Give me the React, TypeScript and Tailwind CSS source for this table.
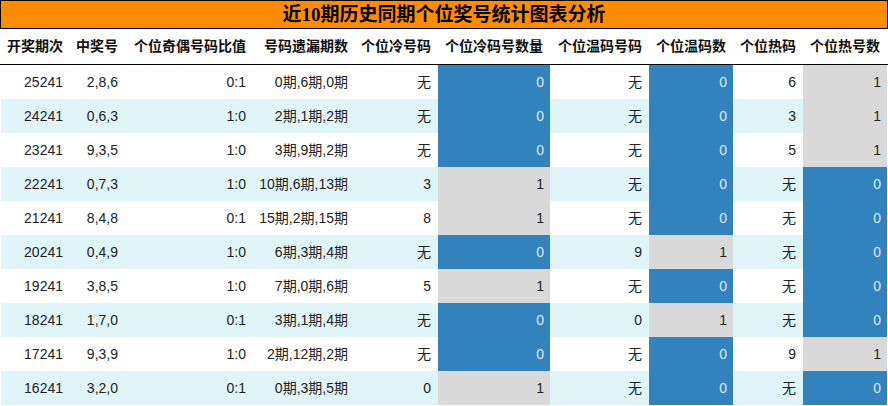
const columns = [
  "开奖期次",
  "中奖号",
  "个位奇偶号码比值",
  "号码遗漏期数",
  "个位冷号码",
  "个位冷码号数量",
  "个位温码号码",
  "个位温码数",
  "个位热码",
  "个位热号数",
]

// 期次, 中奖号, 奇偶比, 遗漏, 冷号, 冷数, 温号, 温数, 热号, 热数
const rows: [string, string, string, string, string, number, string, number, string, number][] = [
  ["25241", "2,8,6", "0:1", "0期,6期,0期", "无", 0, "无", 0, "6", 1],
  ["24241", "0,6,3", "1:0", "2期,1期,2期", "无", 0, "无", 0, "3", 1],
  ["23241", "9,3,5", "1:0", "3期,9期,2期", "无", 0, "无", 0, "5", 1],
  ["22241", "0,7,3", "1:0", "10期,6期,13期", "3", 1, "无", 0, "无", 0],
  ["21241", "8,4,8", "0:1", "15期,2期,15期", "8", 1, "无", 0, "无", 0],
  ["20241", "0,4,9", "1:0", "6期,3期,4期", "无", 0, "9", 1, "无", 0],
  ["19241", "3,8,5", "1:0", "7期,0期,6期", "5", 1, "无", 0, "无", 0],
  ["18241", "1,7,0", "0:1", "3期,1期,4期", "无", 0, "0", 1, "无", 0],
  ["17241", "9,3,9", "1:0", "2期,12期,2期", "无", 0, "无", 0, "9", 1],
  ["16241", "3,2,0", "0:1", "0期,3期,5期", "0", 1, "无", 0, "无", 0],
]

const grid =
  "grid grid-cols-[69px_55px_128px_102px_83px_112px_99px_84px_70px_84px]"

function CountCell({ value }: { value: number }) {
  if (value === 0) {
    return (
      <div className="flex items-center justify-end pr-[6px] bg-[#3182bd] text-[#dbeaf5]">
        {value}
      </div>
    )
  }
  return (
    <div className="flex items-center justify-end pr-[6px] bg-[#d9d9d9] text-[#222]">
      {value}
    </div>
  )
}

function Cell({ children }: { children: React.ReactNode }) {
  return <div className="flex items-center justify-end pr-[7px]">{children}</div>
}

export default function App() {
  return (
    <div className="w-[888px] h-[406px] bg-white overflow-hidden font-['Liberation_Sans','Noto_Sans_CJK_SC',sans-serif] text-[14px] text-[#222]">
      <div className="h-[29px] bg-[#ff8c00] border border-black flex items-center justify-center">
        <span className="font-['Liberation_Serif','Noto_Sans_CJK_SC',serif] font-bold text-[19px] text-black leading-none">
          近10期历史同期个位奖号统计图表分析
        </span>
      </div>
      <div className={`${grid} h-[36px] px-px border-b border-black font-bold text-[#111]`}>
        {columns.map((c) => (
          <div key={c} className="flex items-center justify-end pr-[7px] whitespace-nowrap">
            {c}
          </div>
        ))}
      </div>
      <div className="px-px">
        {rows.map((r, i) => (
          <div
            key={r[0]}
            className={`${grid} h-[34px] ${i % 2 === 1 ? "bg-[#dff5f8]" : "bg-white"}`}
          >
            <Cell>{r[0]}</Cell>
            <Cell>{r[1]}</Cell>
            <Cell>{r[2]}</Cell>
            <Cell>{r[3]}</Cell>
            <Cell>{r[4]}</Cell>
            <CountCell value={r[5]} />
            <Cell>{r[6]}</Cell>
            <CountCell value={r[7]} />
            <Cell>{r[8]}</Cell>
            <CountCell value={r[9]} />
          </div>
        ))}
      </div>
    </div>
  )
}
